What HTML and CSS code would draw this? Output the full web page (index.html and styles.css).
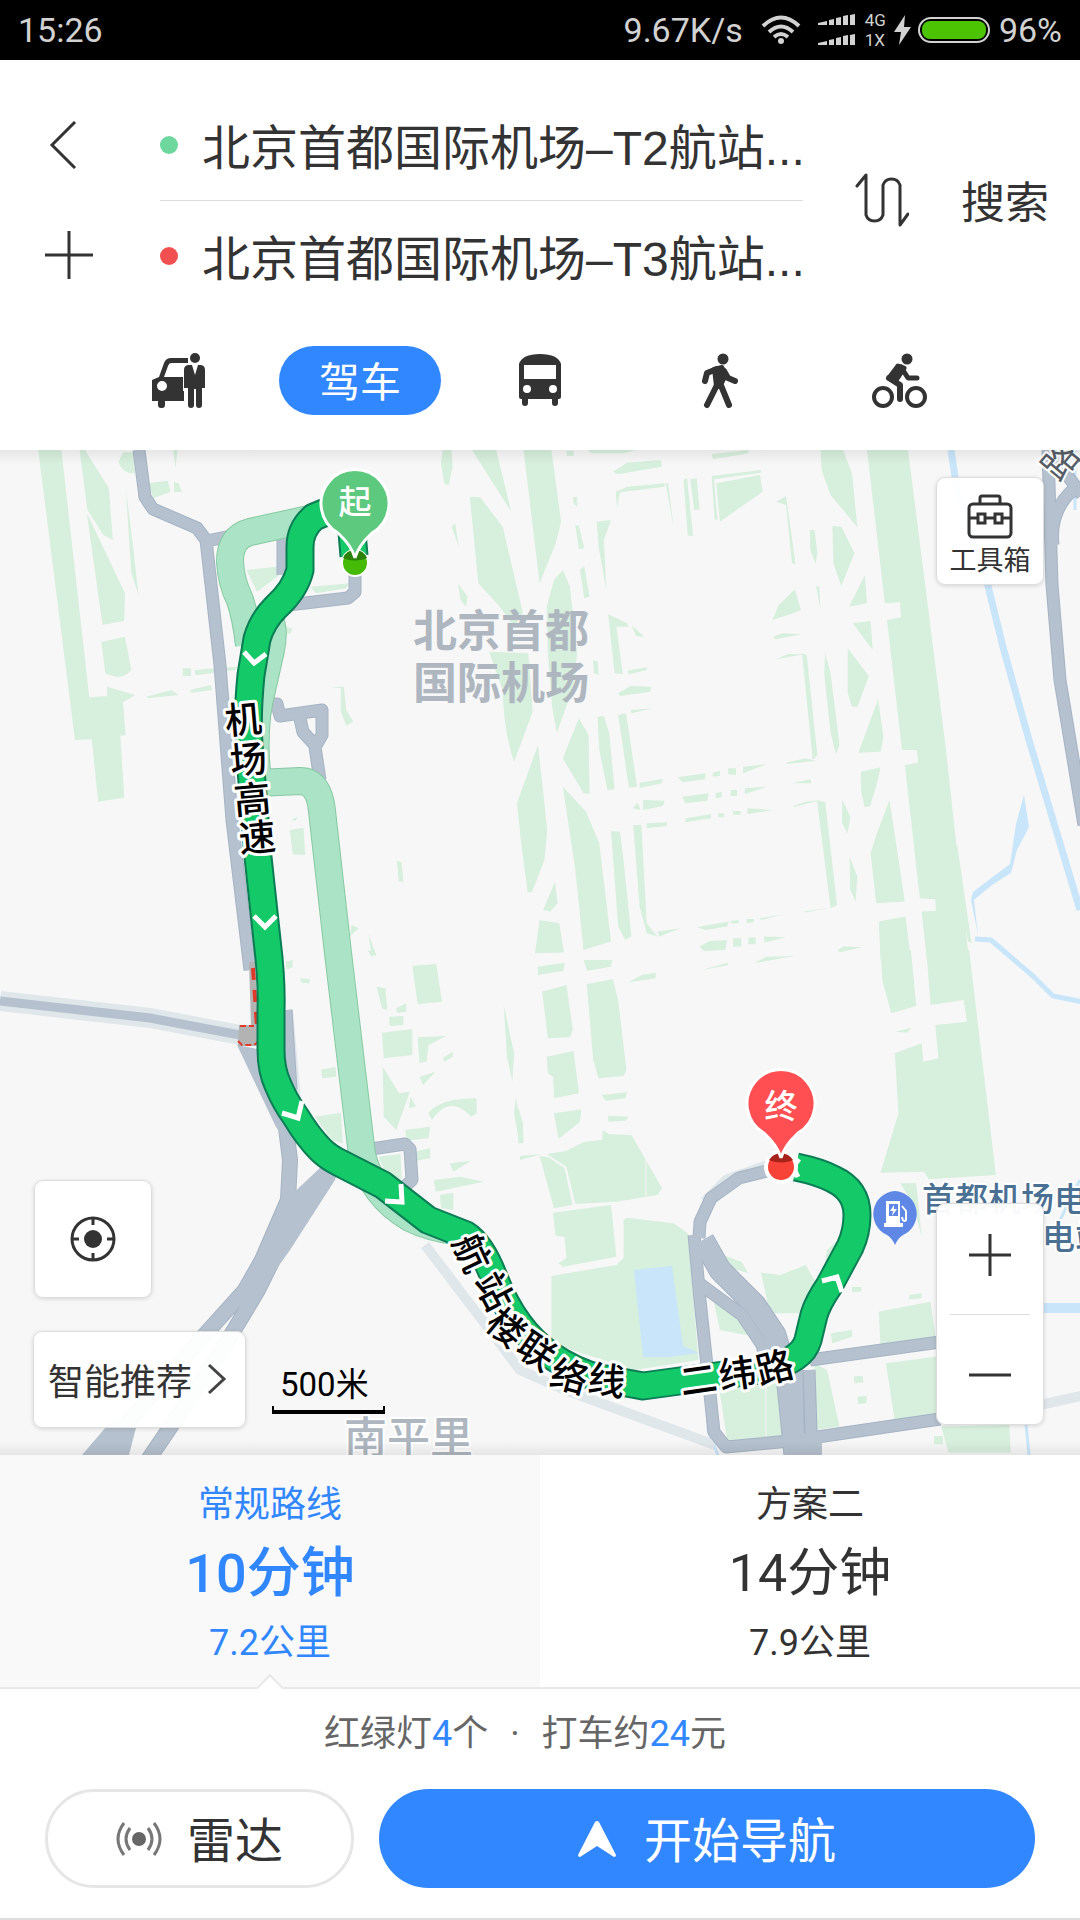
FILE: index.html
```html
<!DOCTYPE html>
<html lang="zh-CN">
<head>
<meta charset="utf-8">
<meta name="viewport" content="width=device-width, initial-scale=1">
<title>路线规划</title>
<link rel="stylesheet" href="styles.css">
</head>
<body>
<div class="app">
  <div class="status">
    <span class="status-time">15:26</span>
    <span>9.67K/s</span>
    <svg class="wifi" width="40" height="30" viewBox="0 0 40 30" aria-hidden="true">
      <g fill="none" stroke="#d2d2d2" stroke-width="4"><path d="M2 11Q20-6 38 11"/><path d="M8 17Q20 6 32 17"/><path d="M13 22Q20 16 27 22"/></g>
      <circle cx="20" cy="26" r="3" fill="#d2d2d2"/>
    </svg>
    <svg class="signal" width="38" height="32" viewBox="0 0 38 32" fill="#d2d2d2" aria-hidden="true">
      <path d="M0 11V9l9-2v4zM11 11V6l5-1v6zM18 11V4l5-1v8zM25 11V2l5-1v10zM32 11V1l5-1v11z"/>
      <path d="M0 31v-2l9-2v4zM11 31v-5l5-1v6zM18 31v-7l5-1v8zM25 31v-9l5-1v10zM32 31V21l5-1v11z"/>
    </svg>
    <span class="network"><span>4G</span><span>1X</span></span>
    <svg class="bolt" width="18" height="30" viewBox="0 0 18 30" aria-hidden="true"><path d="M11 0L0 17h7L5 30 17 12h-7z" fill="#d2d2d2"/></svg>
    <span class="battery"><span class="battery-level"></span></span>
    <span>96%</span>
  </div>

  <header class="search">
    <div class="search-row">
      <div class="side">
        <button class="icon-button" type="button" aria-label="返回">
          <svg width="48" height="48" viewBox="0 0 48 48"><path d="M30 1L7 24l23 23" fill="none" stroke="#333" stroke-width="3"/></svg>
        </button>
        <button class="icon-button" type="button" aria-label="添加途经点">
          <svg width="48" height="48" viewBox="0 0 48 48"><path d="M24 0v48M0 24h48" stroke="#333" stroke-width="3"/></svg>
        </button>
      </div>
      <div class="fields">
        <label class="field"><i class="dot dot-from"></i><input type="text" aria-label="起点" value="北京首都国际机场–T2航站..."></label>
        <label class="field"><i class="dot dot-to"></i><input type="text" aria-label="终点" value="北京首都国际机场–T3航站..."></label>
      </div>
      <button class="icon-button swap" type="button" aria-label="交换起终点">
        <svg width="54" height="54" viewBox="0 0 54 54" fill="none" stroke="#333" stroke-width="3" stroke-linecap="round" stroke-linejoin="round"><path d="M2 13L11 2v40a9 9 0 0 0 17 0V12a9 9 0 0 1 17 0v40l8-11"/></svg>
      </button>
      <button class="search-button" type="button">搜索</button>
    </div>
    <nav class="modes">
      <button class="mode" type="button" aria-label="打车">
        <svg width="56" height="56" viewBox="0 0 56 56" fill="#333">
          <path fill-rule="evenodd" d="M0 27l7-3 5-14q2-5 7-5h17v5H19q-2 0-3 3l-4 11h19v14h1v10H0zM5 33a5 5 0 1 0 10 0 5 5 0 1 0-10 0z"/><rect x="6" y="46" width="7" height="9" rx="3"/>
          <circle cx="43" cy="5" r="5"/><path d="M37 12q-5 0-5 5v18h4v17q0 3 3 3t3-3V36h2v16q0 3 3 3t3-3V35h3V17q0-5-5-5h-2l-3 10-3-10z"/>
        </svg>
      </button>
      <button class="mode mode-active" type="button">驾车</button>
      <button class="mode" type="button" aria-label="公交">
        <svg width="44" height="54" viewBox="0 0 44 54" fill="#333"><path fill-rule="evenodd" d="M1 10Q4 0 22 0t21 10v33q0 2-2 2h-1v4q0 3-3 3t-3-3v-4H10v4q0 3-3 3t-3-3v-4H3q-2 0-2-2zM6 11h32v14H6zM5 35a4 4 0 1 0 8 0 4 4 0 1 0-8 0zm26 0a4 4 0 1 0 8 0 4 4 0 1 0-8 0z"/></svg>
      </button>
      <button class="mode" type="button" aria-label="步行">
        <svg width="36" height="56" viewBox="0 0 36 56"><circle cx="21" cy="6" r="5.500" fill="#333"/><path d="M12 16l8-2 4 8-6 12-4-1z" fill="#333" stroke="#333" stroke-width="4" stroke-linejoin="round"/><path d="M15 16L5 20 3 28M22 18l4 7 7 3M15 32L5 52M18 30l9 22" fill="none" stroke="#333" stroke-width="6" stroke-linecap="round" stroke-linejoin="round"/></svg>
      </button>
      <button class="mode" type="button" aria-label="骑行">
        <svg width="56" height="56" viewBox="0 0 56 56" fill="none" stroke="#333" stroke-linecap="round" stroke-linejoin="round"><circle cx="35" cy="6" r="5.500" fill="#333" stroke="none"/><circle cx="11" cy="44" r="9" stroke-width="4"/><circle cx="44" cy="44" r="9" stroke-width="4"/><path d="M26 13l-9 12 7 2 8-12z" fill="#333" stroke-width="5"/><path d="M29 14l7 11h9" stroke-width="5"/><path d="M17 25l11 7v14" stroke-width="6"/></svg>
      </button>
    </nav>
  </header>

  <main class="map">
    <svg class="map-canvas" viewBox="0 450 1080 1005" preserveAspectRatio="xMidYMid slice" role="img" aria-label="路线地图">
      <g fill="#d7efdd">
        <g transform="translate(0 440) scale(.357 .3333)">
          <path d="M107 30H172L250 772 343 765 352 885 337 887 348 1073 275 1085 257 898 210 900ZM223 30H238L305 145 316 300 290 285 245 210ZM243 218L350 460 348 543 287 554ZM284 606L350 590 368 690Q340 725 295 700ZM300 740L378 765 340 790 300 775ZM345 37H372L378 100Q340 100 332 65ZM352 145L365 250 388 465 368 400ZM415 130L470 122 478 155 430 175ZM487 126L500 130 510 155 488 157ZM485 30H497L492 85Z"/>
          <path d="M410 770L480 750 500 765 415 775ZM533 750L590 735 595 750 535 758ZM512 685H535V708H512ZM545 690L665 680 660 690 548 706ZM925 741L963 740 970 810 990 845 970 857 955 815 955 745ZM812 1170L850 1163 855 1245 820 1243ZM815 1140L833 1130 828 1142ZM1112 1262L1125 1268 1130 1325 1117 1325ZM690 390L790 378V400L720 455ZM870 440L980 430 970 445 885 460ZM985 1455L1005 1465 980 1490ZM1032 1480L1055 1550 1040 1540ZM800 560L818 565 815 580 800 582Z"/>
          <path d="M1240 30H1265L1268 80 1257 135 1245 133 1235 70ZM1322 30H1390L1432 215ZM1316 170L1345 172 1408 260 1465 520 1440 560 1400 500 1340 430ZM1265 260L1275 250 1285 320ZM1283 430L1310 470 1305 500 1290 480ZM1370 635L1480 640 1492 815 1440 965Q1410 870 1408 750ZM1507 915L1533 1170 1525 1260 1490 1357H1478L1460 1210 1448 1090Z"/>
        </g>
        <g transform="translate(520 440) scale(.357 .3333)">
          <path d="M10 30H88L115 245 100 310 55 430ZM120 390L95 420 75 500 78 640 90 800 103 878 150 740 160 640 140 440ZM165 835L192 885 195 1062 178 1060 120 955ZM120 1040L185 1115 222 1210 255 1505 178 1530 155 1290ZM217 830L235 828 250 880 265 1048 245 1050 222 930ZM275 825L297 820 328 1040 305 1043ZM215 245L255 240 235 300 242 450 220 320ZM155 255L165 258 180 325 165 328ZM168 390L180 378 195 470 180 475ZM247 523L300 550 305 560 270 560 288 703 265 700ZM312 555L348 590 325 588ZM42 1540L55 1440 110 1450 123 1538ZM65 1410L98 1325 105 1390 85 1415ZM205 660L218 665 220 705 207 700Z"/>
          <path d="M300 692L355 682V690L305 703ZM275 760L310 738 368 740 365 755 280 768ZM310 810L372 805 312 820ZM335 1028L400 1017 398 1030 335 1043ZM442 1012L520 1000 518 1018 455 1027ZM540 998L560 992V1008L540 1010ZM583 985H605V1005L583 1003ZM625 980L690 973 625 1000ZM745 968L800 955 830 962 750 972ZM315 1105L330 1088 338 1110ZM345 1080L405 1082 400 1098 345 1110ZM455 1070L528 1060 525 1082 462 1090ZM548 1060L565 1055V1072L548 1075ZM590 1050H608V1068H590ZM630 1045L692 1040 630 1062ZM762 1030L815 1018V1030ZM355 1150L413 1147 410 1158 355 1165ZM465 1135L535 1122V1135L462 1147ZM555 1120H572V1132H555ZM597 1113H618V1124H597ZM637 1105L710 1110 637 1122ZM765 1098L800 1085 845 1080 768 1100Z"/>
          <path d="M255 1173L280 1175 290 1260 312 1490 295 1500 275 1460ZM317 1155L340 1155 355 1450 385 1490 355 1480 335 1400ZM260 95L300 68 395 60 397 80 275 103ZM190 30H325L290 40H200ZM268 155L300 140 405 130V140L280 157 272 205ZM408 130L415 130 430 260ZM458 118L468 115 485 287 470 287ZM477 118L495 115 503 208 488 210ZM537 42L640 30V40L540 58ZM550 130L672 105 680 155 560 245ZM537 108L675 90V98L542 118ZM537 110H543L553 240 545 238ZM718 185L745 168 772 373 762 370 745 195ZM842 30H905L930 100 945 262 870 165 845 90ZM875 257L900 260 937 340 900 438 878 370ZM812 270L825 270 833 340 828 372 813 330ZM130 32H150V48H132ZM148 172L160 170V200L150 190Z"/>
          <path d="M966 405L972 490 922 500ZM932 550L982 543 988 630ZM918 625L977 708 945 800 930 800 918 760ZM1003 778L1018 890 1010 935 948 938ZM955 995L1010 982 1000 1030 980 1100 965 1100 955 1050ZM1035 1080L1078 1385 998 1390 982 1240 1000 1180ZM1005 1445L1080 1430 1095 1560H1010ZM707 540L725 495 770 448 787 510 765 520ZM830 440L838 438 842 510ZM790 640L803 645 833 945 820 960ZM855 640L870 700 895 915 885 942 870 880 852 700ZM832 1082L855 1085 888 1395 870 1405ZM903 1080L925 1130 918 1180 902 1150ZM923 1250L945 1310 940 1385 925 1350ZM710 590L735 580 790 583 715 598ZM718 658L750 642 795 643Z"/>
          <path d="M972 30H1087L1190 900 1258 1560H1140L1125 1415 1165 1413 1163 1378 1120 1375 1078 975 1115 968 1112 930 1070 930 1028 540 1067 532 1065 487 1022 490ZM1224 1210L1265 1510 1255 1505 1218 1290ZM385 1475L450 1465 390 1490ZM495 1462L585 1445 580 1460 520 1470ZM590 1443L612 1440V1450H590ZM635 1437H655V1447L635 1450ZM672 1435L740 1423 675 1440ZM795 1415L870 1403 800 1418ZM503 1520L530 1503 580 1500 575 1530 515 1533ZM597 1495H620V1520H597ZM640 1493H660V1513H640ZM683 1490L745 1492 685 1508ZM890 1530L905 1520 960 1522 895 1537Z"/>
        </g>
        <g transform="translate(0 950) scale(.357 .3333)">
          <path d="M1155 47L1222 42 1238 155 1170 163ZM1070 248L1155 237V315L1075 325ZM1170 262L1250 258 1200 285 1195 335 1175 338ZM1240 325L1268 305V320L1245 335ZM1072 350L1118 430 1148 425 1110 540 1075 500ZM1175 380L1220 365 1185 405ZM1200 490Q1230 445 1335 445V490L1320 500Q1260 430 1210 510ZM1135 540L1205 530 1200 565 1140 572ZM1160 605L1205 595V625L1165 632ZM1215 690L1290 680 1355 695 1220 725ZM1232 735L1270 728V780L1236 775ZM1260 640L1320 632 1270 665ZM1090 200L1130 198V225L1092 228ZM1055 110L1080 115 1085 180 1070 175ZM1110 175L1138 160V185L1112 188ZM1030 0L1055 10 1040 20ZM900 358L940 352 942 380 902 385ZM882 500L955 488 960 580 930 570ZM1411 165L1440 310 1435 395 1420 320ZM1445 440L1465 575 1455 580 1440 490ZM1060 620L1122 612 1125 690 1080 670ZM800 35L820 30V52L803 58ZM840 85L870 88 865 100 845 98ZM1150 440L1165 470 1145 475Z"/>
        </g>
        <g transform="translate(520 950) scale(.357 .3333)">
          <path d="M62 125L130 105 148 240 140 262 78 265ZM187 102L260 88 275 150 298 360 290 378 220 385 205 330ZM75 320L150 303 165 430 95 445 93 380 78 370ZM95 490L172 478 168 515 108 567ZM178 30H258L255 50 188 62ZM50 50L125 38 122 62 50 75ZM-5 470L8 520 10 580-5 580ZM228 435L300 427 295 445 240 452ZM246 497L305 500 295 512 248 515ZM305 97L340 75 380 68V85ZM75 612L130 603 180 575 230 570 232 540 250 553 312 555 398 715 385 735 270 755 155 762 130 650ZM55 618L80 622 125 655 147 765 95 775ZM92 788L255 765 270 920 120 950 108 940 130 925 125 860 100 858ZM88 978L270 945 290 925V810L300 803 430 820 470 850 500 1230 320 1260 88 1180Z"/>
          <path d="M1138 0H1258L1333 675 1145 688 1132 665 1010 668 1060 490 1050 310 1125 280 1130 335 1172 325 1163 225 1252 215 1243 150 1150 165ZM1010 0H1095L1110 168 1040 190 1015 90ZM1052 245L1095 233 1085 248ZM510 60L580 38 585 45ZM655 40L690 20 770 18ZM675 968L730 975 800 945 830 1000 780 1090 700 1090ZM860 900L900 860 880 920 850 970ZM530 900L620 935 640 970 580 950ZM540 1040L640 1120 660 1160 560 1140ZM1005 1085L1150 1055 1165 1170 1010 1190ZM1025 1240L1165 1220V1400L1050 1415ZM1180 1430L1370 1425 1375 1508H1200ZM560 1330L690 1290 760 1280 765 1460 580 1470ZM825 1240L860 1260 895 1430 825 1440ZM935 1280L960 1278 962 1298 937 1300ZM945 1340L972 1338 970 1360 947 1362ZM1160 1458H1185V1483H1160ZM930 1010L958 1012 955 1025H930ZM1090 1035L1125 1030V1045L1090 1048ZM870 1150L930 1140V1160L875 1180ZM1065 700L1110 700 1125 860 1100 760Z"/>
          <path d="M0 618L60 612 0 630Z"/>
        </g>
      </g>
      <path d="M646 1160v36M766 1380v60" stroke="#f7f7f7" fill="none"/>
      <g fill="#c9e5fa">
        <path d="M634 1270l38-4 11 80 16 7-30 4-26 0z"/>
        <path d="M1024 795l5 32-12 23-6 23-19 12-18 15 4 35-7-35 2-8 17-13 20-15 6-40z"/>
      </g>
      <path d="M951 450l6 40 30 92 16 65 26 93 51 170" fill="none" stroke="#c9e5fa" stroke-width="7"/>
      <path d="M975 939l16 1 42 36 20 20 30 6" fill="none" stroke="#c9e5fa" stroke-width="5"/>
      <path d="M1040 1308h40" fill="none" stroke="#c9e5fa" stroke-width="10"/>
      <path d="M1026 1424l3 31M1080 1180l-20 40M706 1380l2 50 10 25M1075 450v60" fill="none" stroke="#c9e5fa" stroke-width="3"/>

      <g fill="none" stroke="#e0e7eb" stroke-width="10">
        <path d="M425 1245l95 125 45 20 150 55M1040 1405l45-10"/>
        <path d="M0 1001l150 17 90 17" stroke-width="20"/>
        <path d="M290 1010l8 90" stroke-width="6"/>
        <path d="M768 1167l-40 14-22 22" stroke-width="14"/>
      </g>
      <g fill="none" stroke="#a5b3c4" stroke-width="13" stroke-linejoin="round">
        <path d="M139 450l6 47 8 12 44 19 9 12 14 125 12 155 18 150M207 541l24-5M283 535v40M355 570v22l-7 6-60 7M265 704h12l3 12 42-6v25l-7 12 5 33M299 714l4 18 11 12"/>
        <path d="M1048 450l4 135 8 95 24 145M1053 545q-4-35 22-57M1052 455l30 40"/>
        <path d="M371 1149l34-5 5 5 2 31-10 9"/>
        <path d="M285 1120l5 40-2 40-26 60-17 30-45 50-70 80-30 45M335 1150l-13 35-32 40-32 65-33 55-60 90-17 25" stroke-width="16"/>
        <path d="M286 1010l5 80"/>
        <path d="M767 1171l-28 7-28 20-11 24-1 16"/>
        <path d="M694 1235l6 65 14 132 12 15 64-6 150-22M810 1360l130-18M797 1370l2 90M809 1370l3 90"/>
        <path d="M703 1240l17 30 35 35 20 30 12 40 8 80" stroke-width="23"/>
        <path d="M700 1284l42 31 20 30 8 30"/>
        <path d="M788 1448h34" stroke-width="16"/>
      </g>
      <g fill="none" stroke="#b5c1ce" stroke-width="11" stroke-linejoin="round">
        <path d="M0 1001l150 17 90 17" stroke-width="9"/>
        <path d="M139 450l6 47 8 12 44 19 9 12 14 125 12 155 18 150M207 541l24-5M283 535v40M355 570v22l-7 6-60 7M265 704h12l3 12 42-6v25l-7 12 5 33M299 714l4 18 11 12"/>
        <path d="M1048 450l4 135 8 95 24 145M1053 545q-4-35 22-57M1052 455l30 40"/>
        <path d="M371 1149l34-5 5 5 2 31-10 9"/>
        <path d="M285 1120l5 40-2 40-26 60-17 30-45 50-70 80-30 45M335 1150l-13 35-32 40-32 65-33 55-60 90-17 25" stroke-width="14"/>
        <path d="M286 1010l5 80"/>
        <path d="M767 1171l-28 7-28 20-11 24-1 16"/>
        <path d="M694 1235l6 65 14 132 12 15 64-6 150-22M810 1360l130-18M797 1370l2 90M809 1370l3 90"/>
        <path d="M703 1240l17 30 35 35 20 30 12 40 8 80" stroke-width="21"/>
        <path d="M700 1284l42 31 20 30 8 30"/>
        <path d="M788 1448h34" stroke-width="14"/>
      </g>
      <path d="M237 1045l20 4 13 31 27 50-12 12-10-17-28-59zM322 1166l22-16-9 30-45 70-30 42-16-8 22-48 20-36zM82 1455l30-35h26l-9 35z" fill="#b5c1ce"/>
      <path d="M249 962h6l3 60v24h-20l1-21h12z" fill="#b3b3b3"/>
      <path d="M253 968l4 60" fill="none" stroke="#e03a2a" stroke-width="4" stroke-dasharray="12 10"/>
      <path d="M240 1026h14M238 1041l4 4 12 0 4-3" fill="none" stroke="#e03a2a" stroke-width="2" stroke-dasharray="6 3"/>

      <g fill="none" stroke-linejoin="round">
        <path stroke="#86caa2" stroke-width="28" d="M318 517L250 532Q230 537 230 562 231 582 240 600 246 618 249 645M270 620Q275 630 271 650L262 690Q254 720 256 760L258 783M258 783L300 781Q319 781 322 811L338 953 362 1155Q372 1195 410 1218 430 1228 455 1231"/>
        <path stroke="#abe3c6" stroke-width="26" d="M318 517L250 532Q230 537 230 562 231 582 240 600 246 618 249 645M270 620Q275 630 271 650L262 690Q254 720 256 760L258 783M258 783L300 781Q319 781 322 811L338 953 362 1155Q372 1195 410 1218 430 1228 455 1231"/>
        <path stroke="#0b7d55" stroke-width="29" d="M354 556L351 520 331 510 314 517Q300 529 300 547V570Q295 590 276 607 262 621 257 639L251 675Q247 715 249 745L258 857 267 940Q272 980 271 1010V1050Q271 1070 278 1085 285 1102 296 1117 308 1137 321 1150 328 1157 340 1163L383 1185 428 1220 466 1235Q482 1245 495 1280 515 1330 550 1355 575 1372 600 1378L643 1386 760 1370Q802 1362 808 1340L814 1315Q818 1302 829 1286L850 1247Q857 1232 857 1215 857 1190 833 1179 820 1172 796 1167"/>
        <path stroke="#14c968" stroke-width="25" d="M354 556L351 520 331 510 314 517Q300 529 300 547V570Q295 590 276 607 262 621 257 639L251 675Q247 715 249 745L258 857 267 940Q272 980 271 1010V1050Q271 1070 278 1085 285 1102 296 1117 308 1137 321 1150 328 1157 340 1163L383 1185 428 1220 466 1235Q482 1245 495 1280 515 1330 550 1355 575 1372 600 1378L643 1386 760 1370Q802 1362 808 1340L814 1315Q818 1302 829 1286L850 1247Q857 1232 857 1215 857 1190 833 1179 820 1172 796 1167"/>
        <path d="M244 652l10 11 12-9M254 916l11 11 11-11M282 1113l16 5 4-17M385 1201l17 1-1-18M822 1281l15-4 5 15M799 1159l-6 8 5 10" stroke="#fff" stroke-width="5" stroke-linejoin="miter"/>
      </g>

      <g class="place-label place-label-major"><text x="413" y="647">北京首都</text><text x="413" y="699">国际机场</text></g>
      <text class="place-label" x="344" y="1453">南平里</text>
      <text class="road-name-muted" transform="translate(1058 459) rotate(-50)">路</text>
      <g class="road-name">
        <text transform="translate(243 717) rotate(-5)">机</text><text transform="translate(248 757) rotate(-5)">场</text><text transform="translate(252 797) rotate(-5)">高</text><text transform="translate(257 835) rotate(-5)">速</text>
        <text transform="translate(474 1252) rotate(65)">航</text><text transform="translate(496 1290) rotate(62)">站</text><text transform="translate(508 1326) rotate(40)">楼</text><text transform="translate(538 1349) rotate(34)">联</text><text transform="translate(570 1374) rotate(15)">络</text><text transform="translate(607 1378) rotate(8)">线</text>
        <text transform="translate(698 1377) rotate(-8)">二</text><text transform="translate(737 1371) rotate(-8)">纬</text><text transform="translate(774 1365) rotate(-14)">路</text>
      </g>
      <path d="M895 1191a23 23 0 0 1 8 44q-5 3-8 10-3-7-8-10a23 23 0 0 1 8-44z" fill="#5f88e6"/>
      <path fill-rule="evenodd" d="M886 1201h14v22h3v4h-19v-4h2zM889 1204v12h9v-12z" fill="#fff"/><path d="M902 1206l4 5v9q-3 3-4-3" fill="none" stroke="#fff" stroke-width="2"/><path d="M894 1205l-4 6h3l-1 5 5-7h-3z" fill="#fff"/>
      <g class="poi-label"><text x="922" y="1211">首都机场电</text><text x="1042" y="1249">电站</text></g>

      <circle cx="355" cy="563" r="13" fill="#45bb08" stroke="#fff" stroke-width="2"/>
      <path d="M343 558a13 13 0 0 1 24 0 14 5 0 0 1-24 0z" fill="#2b8205"/>
      <path d="M355 558q-3-12-17-25a34 34 0 1 1 34 0q-14 13-17 25z" fill="#5cc97f" stroke="#fff" stroke-width="3"/>
      <text class="pin-text" x="355" y="514">起</text>
      <circle cx="781" cy="1167" r="15" fill="#f84438" stroke="#fff" stroke-width="4"/>
      <path d="M769 1160a14 14 0 0 1 24 0 14 5 0 0 1-24 0z" fill="#a8221c"/>
      <path d="M781 1158q-3-12-17-25a34 34 0 1 1 34 0q-14 13-17 25z" fill="#ff4f52" stroke="#fff" stroke-width="3"/>
      <text class="pin-text" x="781" y="1118">终</text>
    </svg>

    <button class="card toolbox" type="button">
      <svg width="46" height="46" viewBox="0 0 46 46" fill="none" stroke="#333" stroke-width="3"><path d="M13 9V4q0-2 2-2h16q2 0 2 2v5"/><rect x="2" y="10" width="42" height="33" rx="4"/><path d="M2 24h9m7 0h10m7 0h9"/><rect x="11" y="20" width="7" height="9"/><rect x="28" y="20" width="7" height="9"/></svg>
      <span>工具箱</span>
    </button>
    <button class="card locate" type="button" aria-label="定位">
      <svg width="48" height="48" viewBox="0 0 48 48"><circle cx="24" cy="24" r="21" fill="none" stroke="#333" stroke-width="3"/><circle cx="24" cy="24" r="9" fill="#333"/><path d="M24 3v7M24 38v7M3 24h7M38 24h7" stroke="#333" stroke-width="3"/></svg>
    </button>
    <button class="card prefer" type="button">
      <span>智能推荐</span>
      <svg width="20" height="32" viewBox="0 0 20 32"><path d="M2 2l15 14L2 30" fill="none" stroke="#444" stroke-width="3"/></svg>
    </button>
    <div class="scale">500米</div>
    <div class="card zoom">
      <button class="zoom-button zoom-in" type="button" aria-label="放大"><svg width="44" height="44" viewBox="0 0 44 44"><path d="M22 1v42M1 22h42" stroke="#333" stroke-width="3"/></svg></button>
      <button class="zoom-button zoom-out" type="button" aria-label="缩小"><svg width="44" height="44" viewBox="0 0 44 44"><path d="M1 22h42" stroke="#333" stroke-width="3"/></svg></button>
    </div>
  </main>

  <section class="routes">
    <button class="route route-active" type="button"><span>常规路线</span><strong>10分钟</strong><span>7.2公里</span></button>
    <button class="route" type="button"><span>方案二</span><strong>14分钟</strong><span>7.9公里</span></button>
  </section>

  <footer class="actions">
    <p class="summary"><span>红绿灯<b>4</b>个</span><span>·</span><span>打车约<b>24</b>元</span></p>
    <div class="buttons">
      <button class="action radar" type="button">
        <svg width="46" height="36" viewBox="0 0 46 36" fill="none" stroke="#777" stroke-width="3"><circle cx="23" cy="18" r="7" fill="#666" stroke="none"/><path d="M14 7q-8 11 0 22M32 7q8 11 0 22M8 2q-12 16 0 32M38 2q12 16 0 32"/></svg>
        <span>雷达</span>
      </button>
      <button class="action start" type="button">
        <svg width="38" height="36" viewBox="0 0 38 36" fill="#fff"><path d="M17 1q2-2 4 0l17 33q0 2-2 2L19 25 2 36q-2 0-2-2z"/></svg>
        <span>开始导航</span>
      </button>
    </div>
  </footer>
</div>
</body>
</html>
```
FILE: styles.css
```css
* { box-sizing: border-box; }

body {
  margin: 0;
  background: #fff;
  color: #333;
  font-family: Roboto, "Noto Sans CJK SC", sans-serif;
}

button, input {
  margin: 0;
  padding: 0;
  border: 0;
  background: none;
  color: inherit;
  font: inherit;
}

svg { display: block; flex: none; }

.app {
  display: flex;
  flex-direction: column;
  min-height: 100vh;
}

/* Status bar */
.status {
  display: flex;
  align-items: center;
  height: 60px;
  padding: 0 18px;
  background: #000;
  color: #d2d2d2;
  font-size: 34px;
}
.status-time { margin-right: auto; }
.wifi { margin-left: 18px; }
.signal { margin-left: 17px; }
.network {
  display: flex;
  flex-direction: column;
  margin-left: 9px;
  font-size: 17px;
  line-height: 20px;
}
.bolt { margin-left: 8px; }
.battery {
  width: 72px;
  height: 26px;
  margin: 0 9px 0 6px;
  padding: 2px;
  border: 2px solid #d2d2d2;
  border-radius: 13px;
}
.battery-level {
  display: block;
  width: 64px;
  height: 18px;
  border-radius: 8px;
  background: #4cc404;
}

/* Search header */
.search { padding-top: 30px; }
.search-row {
  display: flex;
  align-items: center;
  padding-right: 31px;
}
.side {
  display: grid;
  grid-template-rows: 110px 110px;
  width: 160px;
  padding-left: 45px;
}
.icon-button {
  display: flex;
  align-items: center;
}
.fields {
  flex: 1;
  min-width: 0;
}
.field {
  display: flex;
  align-items: center;
  height: 110px;
  gap: 24px;
}
.field + .field { border-top: 1px solid #ddd; }
.field input {
  flex: 1;
  min-width: 0;
  height: 72px;
  padding-bottom: 2px;
  font-family: "Liberation Sans", "Noto Sans CJK SC", sans-serif;
  font-size: 48px;
}
.dot {
  width: 18px;
  height: 18px;
  border-radius: 50%;
}
.dot-from { background: #6dd79d; }
.dot-to { background: #f25050; }
.swap { margin: 0 52px; }
.search-button { font-size: 44px; }

.modes {
  display: grid;
  grid-template-columns: repeat(5, 1fr);
  justify-items: center;
  padding: 36px 90px 35px;
}
.mode {
  display: flex;
  align-items: center;
  justify-content: center;
  width: 162px;
  height: 69px;
  border-radius: 35px;
}
.mode-active {
  padding-bottom: 4px;
  background: #3187ff;
  color: #fff;
  font-size: 41px;
}

/* Map */
.map {
  position: relative;
  flex: 1;
  min-height: 900px;
  overflow: hidden;
  background: #f7f7f7;
}
.map-canvas {
  position: absolute;
  inset: 0;
  width: 100%;
  height: 100%;
}
.map::after {
  content: "";
  position: absolute;
  inset: 0;
  background:
    linear-gradient(rgba(0, 0, 0, .07), transparent) top / 100% 14px no-repeat,
    linear-gradient(transparent, rgba(0, 0, 0, .07)) bottom / 100% 14px no-repeat;
  pointer-events: none;
}
.place-label, .road-name, .road-name-muted, .poi-label {
  paint-order: stroke;
  stroke: #fff;
  stroke-width: 4px;
  stroke-linejoin: round;
  font-family: "Noto Sans CJK SC", sans-serif;
}
.place-label {
  fill: #aeb6bf;
  font-size: 43px;
  font-weight: 500;
}
.place-label-major {
  font-size: 44px;
  font-weight: 700;
  stroke: none;
}
.road-name {
  fill: #000;
  stroke-width: 6px;
  font-size: 37px;
  font-weight: 500;
}
.road-name-muted {
  fill: #555d66;
  font-size: 36px;
}
.road-name text, .road-name-muted {
  text-anchor: middle;
  dominant-baseline: central;
}
.poi-label {
  fill: #4a7093;
  font-size: 33px;
  font-weight: 500;
}
.pin-text {
  fill: #fff;
  font-size: 33px;
  font-weight: 500;
  text-anchor: middle;
}

.card {
  position: absolute;
  border: 1px solid #ddd;
  border-radius: 9px;
  background: rgba(255, 255, 255, .96);
  box-shadow: 0 1px 4px rgba(0, 0, 0, .14);
}
.toolbox {
  top: 27px;
  right: 36px;
  display: flex;
  flex-direction: column;
  align-items: center;
  gap: 3px;
  width: 108px;
  height: 108px;
  padding-top: 16px;
  font-size: 27px;
  line-height: 36px;
}
.locate {
  left: 34px;
  bottom: 157px;
  display: grid;
  place-items: center;
  width: 118px;
  height: 118px;
}
.prefer {
  left: 33px;
  bottom: 27px;
  display: flex;
  align-items: center;
  justify-content: space-between;
  width: 213px;
  height: 97px;
  padding: 0 18px 2px 14px;
  font-size: 36px;
}
.scale {
  position: absolute;
  left: 272px;
  bottom: 41px;
  width: 113px;
  padding-left: 6px;
  border: solid #000;
  border-width: 0 2px 4px;
  border-image: linear-gradient(transparent 86%, #000 86%) 4;
  color: #000;
  font-size: 33px;
  line-height: 50px;
}
.zoom {
  right: 36px;
  bottom: 30px;
  width: 108px;
  padding: 0 13px;
}
.zoom-button {
  display: flex;
  align-items: center;
  justify-content: center;
  width: 100%;
  height: 110px;
}
.zoom-in { padding-bottom: 8px; }
.zoom-out {
  padding-top: 10px;
  border-top: 1px solid #ddd;
}

/* Route choices */
.routes {
  display: grid;
  grid-template-columns: 1fr 1fr;
  border-bottom: 2px solid #e8e8e8;
}
.route {
  position: relative;
  display: flex;
  flex-direction: column;
  align-items: center;
  gap: 9px;
  padding: 26px 0 20px;
  font-size: 36px;
  line-height: 48px;
}
.route strong {
  font-size: 52px;
  font-weight: 400;
  line-height: 72px;
}
.route-active {
  background: #f9f9f9;
  color: #3187ff;
}
.route-active strong {
  font-size: 54px;
  font-weight: 500;
}
.route-active::after {
  content: "";
  position: absolute;
  bottom: -11px;
  left: 50%;
  width: 18px;
  height: 18px;
  margin-left: -10px;
  border: solid #e8e8e8;
  border-width: 2px 0 0 2px;
  background: #fff;
  transform: rotate(45deg);
}

/* Bottom actions */
.actions {
  position: relative;
  padding: 18px 45px 30px;
  border-bottom: 2px solid #ddd;
  background: #fff;
}
.summary {
  display: flex;
  justify-content: center;
  gap: 22px;
  margin: 0;
  padding-right: 30px;
  color: #666;
  font-size: 36px;
  line-height: 54px;
}
.summary b {
  color: #3187ff;
  font-weight: 400;
}
.buttons {
  display: grid;
  grid-template-columns: 8fr 17fr;
  gap: 25px;
  margin-top: 28px;
}
.action {
  display: flex;
  align-items: center;
  justify-content: center;
  gap: 25px;
  height: 99px;
  border-radius: 50px;
  font-size: 48px;
}
.action span { padding-bottom: 4px; }
.radar { border: 3px solid #e6e6e6; }
.start {
  gap: 28px;
  background: #3187ff;
  color: #fff;
}
```
